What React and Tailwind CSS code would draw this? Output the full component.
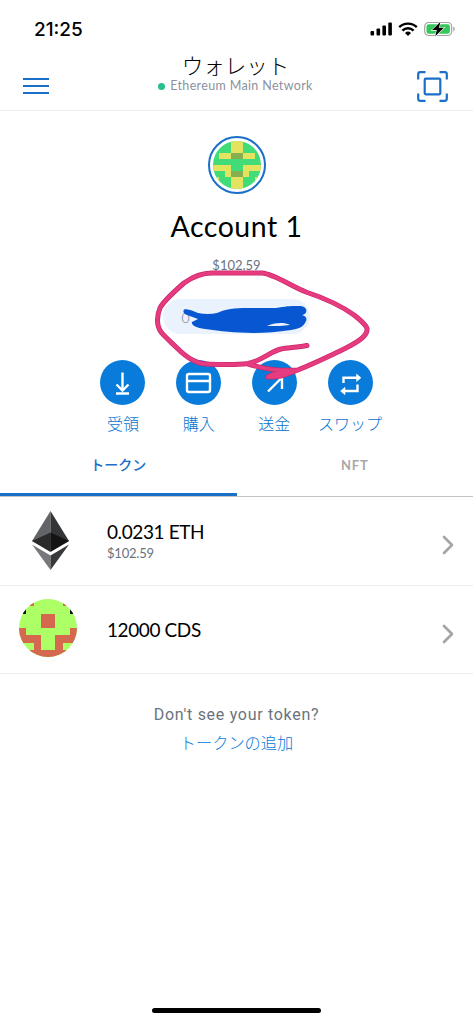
import { ChevronRight } from "lucide-react";

const ACCOUNT_PIXELS = [
  "...yy...",
  "...yy...",
  ".yyooyy.",
  "........",
  "yyy..yyy",
  "..yooy..",
  "y..yy..y",
  "...yy...",
];

const CDS_PIXELS = [
  ".r....r.",
  "k......k",
  "...rr...",
  "...rr...",
  "r......r",
  "rrr..rrr",
  "..r..r..",
  "rrrrrrrr",
];

const COLORS = { y: "#e3e35f", o: "#86b04f", r: "#d5694f", k: "#111111" };

/** Round blocky avatar drawn from an 8x8 pixel map. */
function Blockie({ pixels, background, className }) {
  return (
    <svg viewBox="0 0 8 8" className={`rounded-full ${className}`} shapeRendering="crispEdges">
      <rect width="8" height="8" fill={background} />
      {pixels.map((row, y) =>
        row.split("").map((p, x) =>
          p === "." ? null : <rect key={`${x}-${y}`} x={x} y={y} width="1" height="1" fill={COLORS[p]} />
        )
      )}
    </svg>
  );
}

function StatusBar() {
  return (
    <div className="flex h-[56px] items-start justify-between pr-[17px] pl-[34px]">
      <span className="mt-[18px] font-['Inter'] text-[19px] leading-[23px] font-medium">21:25</span>
      <div className="mt-[21px] flex items-center gap-[6px]">
        <svg className="h-[16px] w-[22px]" viewBox="0 0 22 16">
          <rect x="0.5" y="10" width="3.6" height="4.6" rx="1" />
          <rect x="6.5" y="7.5" width="3.6" height="7.1" rx="1" />
          <rect x="12.400" y="4.5" width="3.6" height="10.1" rx="1" />
          <rect x="18.300" y="1.5" width="3.6" height="13.1" rx="1" />
        </svg>
        <svg className="h-[16px] w-[20px]" viewBox="0 0 20 16" fill="none" stroke="#000" strokeWidth="2.4">
          <path d="M1.2 6.2a12.6 12.6 0 0 1 17.6 0" />
          <path d="M4.4 9.6a8 8 0 0 1 11.2 0" />
          <path d="M7 12a4.4 4.4 0 0 1 6 0l-3 3z" fill="#000" stroke="none" />
        </svg>
        <svg className="h-[16px] w-[32px]" viewBox="0 0 32 16">
          <rect x="0.7" y="1.5" width="27" height="13" rx="4" fill="#fff" stroke="#a3a3a3" strokeWidth="1.2" />
          <rect x="2.5" y="3.2" width="23.4" height="9.6" rx="2.4" fill="#34c759" />
          <path d="M29.3 5.6c2 .8 2 4 0 4.8z" fill="#a3a3a3" />
          <path d="M16.5.7 8 9.1h4.8l-1.6 6.2 8.7-8.5h-5z" stroke="#fff" strokeWidth="1.2" paintOrder="stroke" />
        </svg>
      </div>
    </div>
  );
}

function Header() {
  return (
    <header className="flex h-[55px] justify-between border-b border-[#ececec] pr-[25px] pl-[23px]">
      <div className="mt-[22px] flex w-[31px] flex-col gap-[5px]">
        <span className="h-[2px] w-[26px] bg-[#1a6fc9]" />
        <span className="h-[2px] w-[26px] bg-[#1a6fc9]" />
        <span className="h-[2px] w-[26px] bg-[#1a6fc9]" />
      </div>
      <div className="flex flex-col items-center">
        <h1 className="h-[22px] text-[21.5px] leading-[20px] font-light">ウォレット</h1>
        <div className="flex h-[16px] items-center gap-[5px]">
          <span className="h-[7px] w-[7px] rounded-full bg-[#29bf8d]" />
          <span className="text-[12.5px] leading-4 tracking-[0.35px] text-[#8b929e]">Ethereum Main Network</span>
        </div>
      </div>
      <svg className="mt-[15px] h-[31px] w-[31px]" viewBox="0 0 31 31" fill="none" stroke="#1a6fc9" strokeWidth="2.2">
        <path d="M1.2 8.500V3.200q0-2 2-2h5.300M22.500 1.200h5.300q2 0 2 2v5.300M29.800 22.500v5.300q0 2-2 2h-5.300M8.500 29.800H3.200q-2 0-2-2v-5.300" />
        <rect x="7.700" y="7.700" width="15.600" height="15.600" rx="1" />
      </svg>
    </header>
  );
}

const ACTIONS = [
  { label: "受領", icon: <path d="M22.500 12.500V30M16.500 24.500l6 6 6-6M16 33.500h13" /> },
  { label: "購入", icon: <path d="M13 14h19q2 0 2 2v14q0 2-2 2H13q-2 0-2-2V16q0-2 2-2zM11 21h23" /> },
  { label: "送金", icon: <path d="M16 31.500 29.500 18M18.500 17.500h11.500V29" /> },
  {
    label: "スワップ",
    icon: (
      <>
        <path d="M15.500 23v-5.300H30M29.500 24.500V31H15" />
        <path d="m28.500 14 4.500 3.800-4.500 3.800zM17 27.200 12.500 31l4.500 3.800z" fill="#fff" strokeWidth="0.5" />
      </>
    ),
  },
];

function AccountOverview() {
  return (
    <section className="flex flex-col items-center">
      <div className="mt-[25px] flex h-[58px] w-[58px] items-center justify-center rounded-full border-[2px] border-[#1a6fc9]">
        <Blockie pixels={ACCOUNT_PIXELS} background="#41dc78" className="h-[48px] w-[48px]" />
      </div>
      <h2 className="mt-[14px] text-[28.5px] leading-[36px] tracking-[0.5px]">Account 1</h2>
      <p className="mt-[13px] text-[13px] leading-[16px] text-[#6a737d]">$102.59</p>
      <div className="mt-[26px] mr-[1px] h-[35px] w-[147px] rounded-full bg-[#eaf3fd] pl-[19px]">
        <span className="text-[14px] leading-[37px] font-light text-[#6a737d]">0</span>
      </div>
      <div className="mt-[26px] flex">
        {ACTIONS.map((action) => (
          <div key={action.label} className="flex w-[75.700px] flex-col items-center">
            <div className="h-[45px] w-[45px] rounded-full bg-[#087bdb]">
              <svg viewBox="0 0 45 45" fill="none" stroke="#fff" strokeWidth="2.4">
                {action.icon}
              </svg>
            </div>
            <span className="mt-[7px] text-[16px] leading-[24px] font-light whitespace-nowrap text-[#0873cf]">
              {action.label}
            </span>
          </div>
        ))}
      </div>
    </section>
  );
}

function Tabs() {
  return (
    <div className="mt-[16px] flex h-[45px] border-b border-[#c4c4c4] text-center leading-[26px] font-bold">
      <div className="h-[44px] w-[236.5px] border-b-[3px] border-[#1a6fc9] text-[14px] font-medium text-[#1a6fc9]">
        トークン
      </div>
      <div className="flex-1 text-[13px] tracking-[0.8px] text-[#a8a8a8]">NFT</div>
    </div>
  );
}

function EthLogo() {
  return (
    <svg className="ml-[2px] h-[59px] w-[37px]" viewBox="0 0 37 59">
      <path d="M18.500 0v40L0 30z" fill="#626468" />
      <path d="M18.500 0v40L37 30z" fill="#343537" />
      <path d="M18.500 21.500V41L0 30z" fill="#2b2b2c" />
      <path d="M18.500 21.500V41L37 30z" fill="#141414" />
      <path d="M0 33.500 18.500 44.500V59z" fill="#77787b" />
      <path d="M37 33.500 18.500 44.500V59z" fill="#37383a" />
    </svg>
  );
}

function TokenRow({ icon, amount, fiat }) {
  return (
    <div className="flex h-[88.5px] items-center border-b border-[#ededed] pr-[9px]">
      <div className="flex w-[107px] justify-center pr-[8px]">{icon}</div>
      <div className="flex-1 pt-px">
        <p className="text-[19px] leading-[24px] tracking-[-0.4px]">{amount}</p>
        {fiat && <p className="text-[13px] leading-[18px] tracking-[-0.2px] text-[#6a737d]">{fiat}</p>}
      </div>
      <ChevronRight className="mt-[9px] h-[32px] w-[32px] text-[#a5a5a5]" />
    </div>
  );
}

const CIRCLE_PATH =
  "M307 345.500c-9 2-20 2-26 3.500-10 2-19 12-33 14.500-15 2-30 1-41 .5-11 0-23-9-30-16-6-6-12-11-16-16-5-7-4-17-1-24 3-6 16-18 24-25 7-5 18-10 28-10h50c12 1 29 13 44 19 18 6 34 13 48 23 9 7 13 12 13 14 1 7-10 14-27 22-19 9-37 18-56 24-6 2-12 2-16 2 5-4 16-5 30-7-14 1-31 0-50-6";

/** Freehand marker strokes that hide and circle the address. */
function Scribble() {
  return (
    <svg
      className="absolute top-[260px] left-[145px] h-[125px] w-[235px]"
      viewBox="145 260 235 125"
      fill="none"
      strokeLinecap="round"
      strokeLinejoin="round"
    >
      <path
        d="M184 309.500c5-1 9 2 14 3.500q10 2 19 0c8-4 18-5 30-5h28c8-1 12-2 20-2h6c7 1 7 8 1 9q6 2 4 6c-2 6-8 8-15 9q-20 3-38 3c-18-.5-32-1.500-48-4-9-1-14-4-13-7l6-3-11-4q-5-2-3-5.500zM267 326c7-3.500 17-4 23-1-6 1-14 1-23 1z"
        fill="#0757d2"
        fillRule="evenodd"
      />
      <path d={CIRCLE_PATH} stroke="#c9286b" strokeWidth="5" />
      <path d={CIRCLE_PATH} stroke="#e73b80" strokeWidth="3.6" />
    </svg>
  );
}

export default function App() {
  return (
    <div className="relative flex h-[1024px] w-[473px] flex-col overflow-hidden bg-white font-['Lato','Noto_Sans_CJK_JP',sans-serif] text-black">
      <StatusBar />
      <Header />
      <AccountOverview />
      <Tabs />
      <TokenRow icon={<EthLogo />} amount="0.0231 ETH" fiat="$102.59" />
      <TokenRow
        icon={<Blockie pixels={CDS_PIXELS} background="#adff66" className="mr-[4px] mb-[2px] h-[58px] w-[58px]" />}
        amount="12000 CDS"
      />
      <div className="mt-[29px] flex flex-col items-center">
        <p className="font-['Roboto'] text-[16px] leading-[24px] tracking-[0.7px] text-[#6a737d]">Don't see your token?</p>
        <a className="mt-[4px] text-[16.200px] leading-[24px] font-light text-[#087bdb]">トークンの追加</a>
      </div>
      <div className="mt-auto mb-[11px] h-[5px] w-[169px] self-center rounded-full bg-black" />
      <Scribble />
    </div>
  );
}
